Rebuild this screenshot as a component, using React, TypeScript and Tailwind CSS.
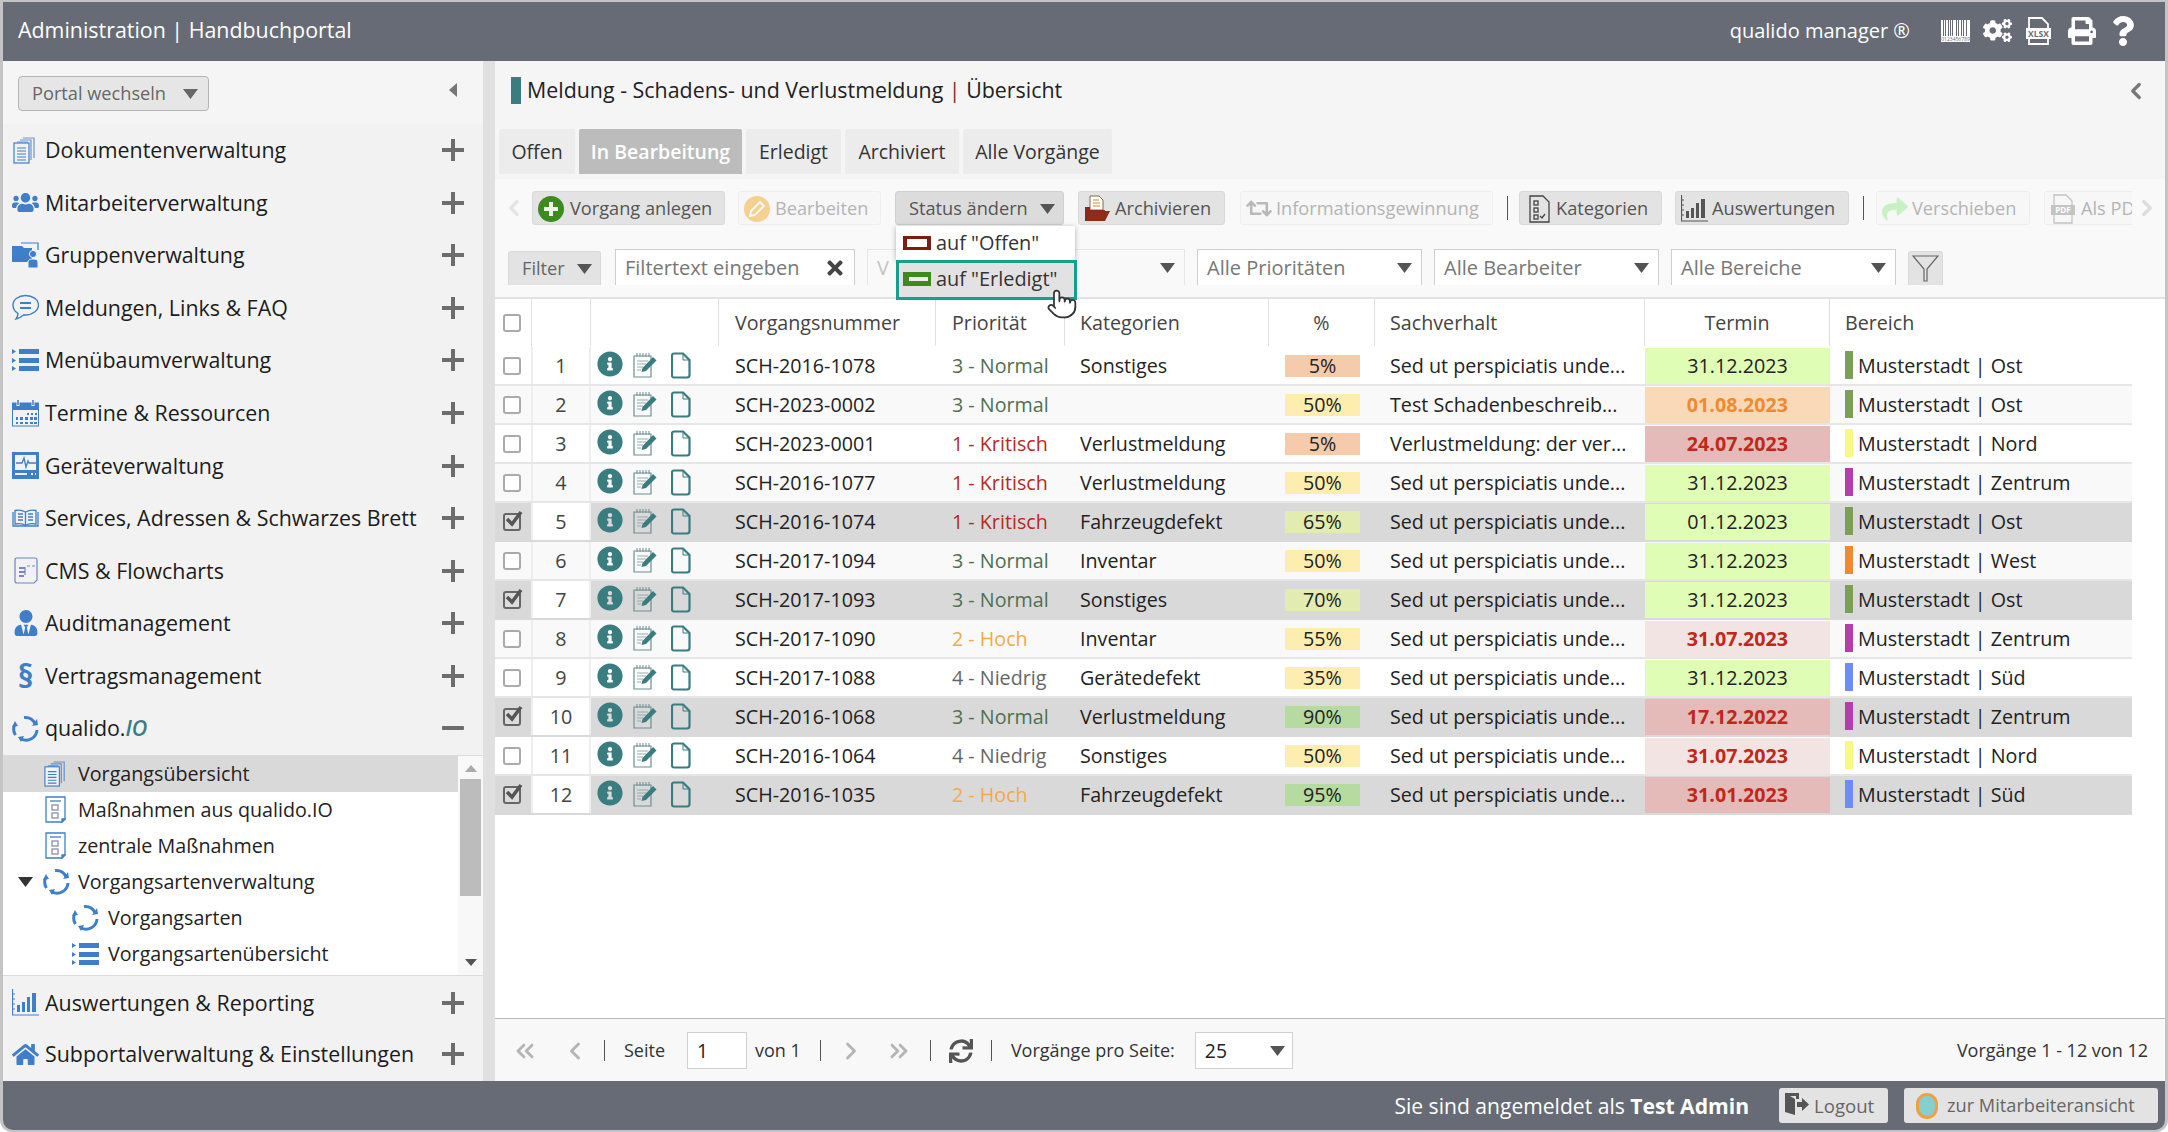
import React from 'react';
import { ChevronLeft, ChevronRight, ChevronsLeft, ChevronsRight, Pointer } from 'lucide-react';
import { FaCogs, FaHome, FaInfoCircle, FaPrint, FaQuestion, FaRetweet, FaShare, FaSync, FaTimes, FaUsers, FaUserTie } from 'react-icons/fa';

const blue = '#3f7fc9';

const Caret: React.FC<{ className?: string }> = ({ className }) => (
  <svg width="15" height="10" viewBox="0 0 15 10" className={className}><path d="M0 0h15L7.5 10z" fill="currentColor" /></svg>
);

const Plus = () => (
  <svg width="22" height="22" viewBox="0 0 22 22"><path d="M9 0h4v9h9v4h-9v9H9v-9H0V9h9z" fill="#6d6d6d" /></svg>
);

const DocsIcon: React.FC<{ size?: number }> = ({ size = 27 }) => (
  <svg width={size} height={size} viewBox="0 0 27 27" fill="none" stroke={blue} strokeWidth="1.2">
    <path d="M11 1h11v20M8 3h11v20M5 5h11" opacity=".8" />
    <rect x="2" y="6" width="15" height="20" fill="#f2f2f2" />
    <path d="M5 11h9M5 14h9M5 17h9M5 20h9M5 23h9" />
  </svg>
);

const ListIcon = () => (
  <svg width="27" height="24" viewBox="0 0 27 24" fill={blue}>
    <path d="M0 1l4 2.5L0 6zM0 10l4 2.5L0 15zM0 18l4 2.5L0 23z" />
    <rect x="7" y="1" width="20" height="5" /><rect x="7" y="10" width="20" height="5" /><rect x="7" y="18" width="20" height="5" />
  </svg>
);

const CycleIcon = () => (
  <svg width="27" height="27" viewBox="0 0 27 27" fill="none" stroke={blue} strokeWidth="3">
    <path d="M12 2.5a11 11 0 0 1 11 6" />
    <path d="M25 15a11 11 0 0 1-16 9" />
    <path d="M3.5 20a11 11 0 0 1-1-10" />
    <path d="M20 11l6-1-1-6zM12 21l-6 1 3 5zM0 12l3-6 3 5z" fill={blue} stroke="none" />
  </svg>
);

const TaskDoc = () => (
  <svg width="21" height="27" viewBox="0 0 21 27" fill="none" stroke={blue} strokeWidth="1.3">
    <path d="M1 1h19v22l-3 3H1z" />
    <path d="M5 5h11" />
    <rect x="7" y="9" width="6" height="5" stroke="#8a8fb0" /><rect x="7" y="17" width="6" height="5" stroke="#8a8fb0" />
    <path d="M17 26l3-3h-3z" fill={blue} />
  </svg>
);

const FolderUser = () => (
  <svg width="27" height="28" viewBox="0 0 27 28" fill={blue}>
    <path d="M0 5h10l2 2h8v14H0z" />
    <path d="M9 2h17v7" fill="none" stroke={blue} strokeWidth="1.2" />
    <circle cx="21" cy="13" r="3.6" stroke="#f2f2f2" />
    <path d="M16 27v-6q0-3 5-3t5 3v6z" stroke="#f2f2f2" />
  </svg>
);

const Chat = () => (
  <svg width="27" height="27" viewBox="0 0 27 27" fill="none" stroke={blue} strokeWidth="1.4">
    <path d="M13.5 1.5C6.5 1.5 1 5.5 1 11c0 4 2.5 7 5 8.500 0 2-1 4-2 5.500 3-.5 6-2.500 8-4.200 1 .2 1 .2 1.500.2 7 0 13-4.500 13-10S20.500 1.500 13.500 1.500z" />
    <path d="M8 9h11M8 14h11" strokeWidth="1.8" />
  </svg>
);

const Calendar = () => (
  <svg width="27" height="27" viewBox="0 0 27 27">
    <rect x="0.500" y="3" width="26" height="23" fill="none" stroke={blue} />
    <rect x="0.500" y="3" width="26" height="7" fill={blue} />
    <path d="M6 0v6M21 0v6" stroke="#f2f2f2" strokeWidth="3" />
    <path d="M6 0v5M21 0v5" stroke={blue} strokeWidth="1.500" />
    <path d="M15 13h2v2h-2zM19 13h2v2h-2zM23 13h2v2h-2zM4 17h2v3H4zM8 17h3v3H8zM13 17h3v3h-3zM18 17h3v3h-3zM22 17h3v3h-3zM4 22h2v2H4zM8 22h3v2H8zM13 22h3v2h-3zM18 22h3v2h-3zM22 22h3v2h-3z" fill={blue} />
  </svg>
);

const Monitor = () => (
  <svg width="27" height="27" viewBox="0 0 27 27">
    <rect x="0" y="0" width="27" height="27" fill={blue} />
    <rect x="3" y="3" width="21" height="15" fill="#f2f2f2" />
    <path d="M4 11h6l2-5 2 9 2-6 1 2h7" fill="none" stroke={blue} strokeWidth="1.300" />
    <path d="M3 22h12M19 22h2M23 22h1" stroke="#f2f2f2" strokeWidth="1.800" />
  </svg>
);

const Book = () => (
  <svg width="27" height="18" viewBox="0 0 27 18" fill="none" stroke={blue} strokeWidth="1.300">
    <path d="M13.500 3C10 1 5 1 3 1.500V15c3-.5 8-.5 10.500 1.500C16 14.500 21 14.500 24 15V1.500C22 1 17 1 13.500 3z" />
    <path d="M1 3v14h25V3M13.500 3v13" />
    <path d="M6 5h5M6 8h5M6 11h5M16 5h5M16 8h5M16 11h5" strokeWidth="1.600" />
  </svg>
);

const CmsDoc = () => (
  <svg width="24" height="27" viewBox="0 0 24 27" fill="none" stroke="#6f86c9" strokeWidth="1.200">
    <path d="M3 1h18q2 0 2 2v20l-3 3H3q-2 0-2-2V3q0-2 2-2z" />
    <path d="M5 11h6M5 15h6M5 19h5" stroke="#7a86c0" strokeWidth="1.800" />
    <path d="M11 10V18M13 9h3M18 9h3" stroke="#7a86c0" />
  </svg>
);

const BarsIcon: React.FC<{ color?: string }> = ({ color = blue }) => (
  <svg width="27" height="27" viewBox="0 0 27 27" fill={color}>
    <rect x="5" y="16" width="3" height="7" /><rect x="10" y="13" width="3" height="10" /><rect x="15" y="8" width="3" height="15" /><rect x="20" y="4" width="4" height="19" />
    <path d="M0.500 0v26H27" fill="none" stroke={color} strokeWidth="1.200" />
    <path d="M1 5h2M1 10h2M1 15h2M1 20h2" stroke={color} />
  </svg>
);

const Barcode = () => (
  <svg width="29" height="22" viewBox="0 0 29 22" fill="#fff" className="ml-[31px]">
    <path d="M0 0h2v16H0zM3 0h1v16H3zM5 0h2v16H5zM8 0h1v16H8zM10 0h1v16h-1zM12 0h3v16h-3zM16 0h1v16h-1zM18 0h2v16h-2zM21 0h1v16h-1zM23 0h2v16h-2zM26 0h3v16h-3z" />
    <rect y="16" width="29" height="6" />
    <text x="14.500" y="21" textAnchor="middle" fontSize="5" fill="#666b75">0123456789</text>
  </svg>
);

const menu: { label: React.ReactNode; icon: React.ReactNode }[] = [
  { label: 'Dokumentenverwaltung', icon: <DocsIcon /> },
  { label: 'Mitarbeiterverwaltung', icon: <FaUsers size={29} color={blue} /> },
  { label: 'Gruppenverwaltung', icon: <FolderUser /> },
  { label: 'Meldungen, Links & FAQ', icon: <Chat /> },
  { label: 'Menübaumverwaltung', icon: <ListIcon /> },
  { label: 'Termine & Ressourcen', icon: <Calendar /> },
  { label: 'Geräteverwaltung', icon: <Monitor /> },
  { label: 'Services, Adressen & Schwarzes Brett', icon: <Book /> },
  { label: 'CMS & Flowcharts', icon: <CmsDoc /> },
  { label: 'Auditmanagement', icon: <FaUserTie size={26} color={blue} /> },
  { label: 'Vertragsmanagement', icon: <span className="text-[32px] leading-none font-bold text-[#3f7fc9]">§</span> },
  { label: <>qualido.<i className="font-semibold text-[#3a7d80]">IO</i></>, icon: <CycleIcon /> },
];

const SideRow: React.FC<{ label: React.ReactNode; icon: React.ReactNode; minus?: boolean; className?: string }> = ({ label, icon, minus, className }) => (
  <div className={`flex items-center pl-[9px] pr-[19px] text-[21.400px] text-[#1c1c1c] ${className ?? 'h-[52.550px]'}`}>
    <span className="w-[27px] h-[27px] flex items-center justify-center shrink-0">{icon}</span>
    <span className="ml-[6px] flex-1 whitespace-nowrap">{label}</span>
    {minus ? <span className="w-[22px] h-[4px] rounded-[1px] bg-[#6d6d6d]" /> : <Plus />}
  </div>
);

const TreeRow: React.FC<{ indent: number; active?: boolean; arrow?: boolean; icon: React.ReactNode; children?: React.ReactNode }> = ({ indent, active, arrow, icon, children }) => (
  <div className={`h-[36px] flex items-center text-[19.700px] text-[#222] whitespace-nowrap ${active ? 'bg-[#d9d9d9]' : ''}`}>
    {arrow ? <Caret className="ml-[15px] text-[#333] mr-[10px]" /> : <span style={{ width: indent }} />}
    <span className="w-[27px] flex justify-center">{icon}</span>
    <span className={arrow ? 'ml-[8px]' : 'ml-[9px]'}>{children}</span>
  </div>
);

const Sidebar = () => (
  <aside className="w-[480px] shrink-0 flex flex-col bg-[#f2f2f2]">
    <div className="h-[63px] shrink-0 bg-[#f5f5f5] flex items-start justify-between pl-[15px] pr-[25px] pt-[15px]">
      <button className="w-[191px] h-[35px] rounded-[4px] border border-[#b5b5b5] bg-[#e6e6e6] text-[#666] text-[18.200px] flex items-center justify-between pl-[13px] pr-[10px]">
        Portal wechseln <Caret className="text-[#666]" />
      </button>
      <svg width="9" height="14" viewBox="0 0 9 14" className="mt-[7px]"><path d="M8 0v14L0 7z" fill="#777" /></svg>
    </div>
    {menu.map((m, i) => <SideRow key={i} label={m.label} icon={m.icon} minus={i === 11} />)}
    <div className="h-[221px] shrink-0 flex bg-white border-y border-[#dcdcdc] overflow-hidden">
      <div className="flex-1 overflow-hidden">
        <TreeRow indent={39} active icon={<DocsIcon size={26} />}>Vorgangsübersicht</TreeRow>
        <TreeRow indent={39} icon={<TaskDoc />}>Maßnahmen aus qualido.IO</TreeRow>
        <TreeRow indent={39} icon={<TaskDoc />}>zentrale Maßnahmen</TreeRow>
        <TreeRow indent={39} arrow icon={<CycleIcon />}>Vorgangsartenverwaltung</TreeRow>
        <TreeRow indent={69} icon={<CycleIcon />}>Vorgangsarten</TreeRow>
        <TreeRow indent={69} icon={<ListIcon />}>Vorgangsartenübersicht</TreeRow>
        <TreeRow indent={69} icon={<CycleIcon />} />
      </div>
      <div className="w-[25px] shrink-0 bg-[#f8f8f8] flex flex-col items-center py-[9px]">
        <svg width="12" height="7" viewBox="0 0 12 7"><path d="M0 7h12L6 0z" fill="#aaa" /></svg>
        <div className="w-[21px] h-[117px] mt-[7px] bg-[#bcbcbc]" />
        <svg width="12" height="7" viewBox="0 0 12 7" className="mt-auto"><path d="M0 0h12L6 7z" fill="#555" /></svg>
      </div>
    </div>
    <SideRow label="Auswertungen & Reporting" icon={<BarsIcon />} className="h-[52.550px] pt-[2px]" />
    <SideRow label="Subportalverwaltung & Einstellungen" icon={<FaHome size={29} color={blue} />} className="h-[52.450px]" />
  </aside>
);

const Btn: React.FC<{ w: number; icon?: React.ReactNode; disabled?: boolean; active?: boolean; children: React.ReactNode }> = ({ w, icon, disabled, active, children }) => (
  <button
    style={{ width: w }}
    className={`h-[34px] shrink-0 rounded-[3px] border flex items-center gap-[4px] pl-[5px] pt-[1px] overflow-hidden whitespace-nowrap text-[18.200px] ${
      disabled ? 'border-[#eeeeee] bg-[#f7f7f7] text-[#b4b4b4]' : active ? 'border-[#d0d0d0] bg-[#dcdcdc] text-[#555]' : 'border-[#d9d9d9] bg-[#e3e3e3] text-[#555]'
    }`}
  >
    {icon}
    {children}
  </button>
);

const Sep = () => <span className="w-px h-[24px] bg-[#555] shrink-0" />;

const Toolbar = () => (
  <div className="flex items-center h-[34px] relative">
    <ChevronLeft size={26} strokeWidth={3} className="text-[#e4e4e4] ml-[6px] mr-[5px] shrink-0" />
    <div className="flex items-center w-[1600px] overflow-hidden">
      <Btn w={193} icon={<svg width="26" height="26" viewBox="0 0 26 26" className="mr-[2px] shrink-0"><circle cx="13" cy="13" r="13" fill="#3d8b1f" /><path d="M11 6h4v5h5v4h-5v5h-4v-5H6v-4h5z" fill="#eef5e8" /></svg>}>Vorgang anlegen</Btn>
      <span className="w-[13px] shrink-0" />
      <Btn w={143} disabled icon={<svg width="26" height="26" viewBox="0 0 26 26" className="mr-[1px] shrink-0"><circle cx="13" cy="13" r="13" fill="#f5d08f" /><path d="M16 6l4 4-9 9-5 1 1-5z" fill="none" stroke="#fff" strokeWidth="1.800" /></svg>}>Bearbeiten</Btn>
      <span className="w-[14px] shrink-0" />
      <Btn w={169} active><span className="ml-[8px] flex-1 text-left">Status ändern</span><Caret className="text-[#555] mr-[8px]" /></Btn>
      <span className="w-[14px] shrink-0" />
      <Btn w={147} icon={<svg width="27" height="27" viewBox="0 0 27 27" className="shrink-0"><path d="M6 1h9l4 4v10H6z" fill="#fff" stroke="#8a6a40" /><path d="M9 5h6M9 8h7M9 11h7" stroke="#c08a3a" /><path d="M1 12h5v3h15l-3 11H1z" fill="#8b2a1a" /><path d="M8 16h18l-5 10H2z" fill="#8f2c1c" /></svg>}>Archivieren</Btn>
      <span className="w-[15px] shrink-0" />
      <Btn w={253} disabled icon={<FaRetweet size={23} className="w-[26px] shrink-0 text-[#b9b9b9]" />}>Informationsgewinnung</Btn>
      <span className="w-[14px] shrink-0" /><Sep /><span className="w-[11px] shrink-0" />
      <Btn w={143} icon={<svg width="22" height="28" viewBox="0 0 22 28" fill="none" stroke="#444" strokeWidth="1.300" className="ml-[3px] shrink-0"><path d="M2 1h13l6 6v20H2z" /><rect x="6" y="6" width="4" height="4" /><rect x="6" y="13" width="4" height="4" /><rect x="6" y="20" width="4" height="4" /><path d="M12 21l2 2 3-4" /></svg>}><span className="ml-[2px]">Kategorien</span></Btn>
      <span className="w-[13px] shrink-0" />
      <Btn w={174} icon={<BarsIcon color="#555" />}>Auswertungen</Btn>
      <span className="w-[14px] shrink-0" /><Sep /><span className="w-[12px] shrink-0" />
      <Btn w={154} disabled icon={<FaShare size={26} className="shrink-0 text-[#c9f0c5]" />}>Verschieben</Btn>
      <span className="w-[14px] shrink-0" />
      <Btn w={96} disabled icon={<svg width="24" height="30" viewBox="0 0 24 30" className="ml-[1px] mr-[2px] shrink-0"><path d="M3 1h12l6 6v22H3z" fill="none" stroke="#c4c4c4" strokeWidth="1.300" /><rect x="0" y="11" width="24" height="10" fill="#c4c4c4" /><text x="12" y="19" textAnchor="middle" fontSize="8" fontWeight="700" fill="#fff">PDF</text></svg>}>Als PDF</Btn>
    </div>
    <ChevronRight size={26} strokeWidth={3} className="text-[#dcdcdc] ml-[2px] shrink-0" />
  </div>
);

const StatusMenu = () => (
  <div className="absolute left-[401px] top-[165px] w-[181px] z-20">
    <div className="w-[179px] h-[34px] bg-white shadow-[0_1px_5px_rgba(0,0,0,0.3)] flex items-center pl-[7px] gap-[5px] text-[19.900px] text-[#333]">
      <span className="w-[28px] h-[14px] border-[3px] border-x-[4px] border-[#7c1c14] bg-white shrink-0" />
      auf "Offen"
    </div>
    <div className="h-[40px] border-[3px] border-[#14a08c] bg-[#e2e2e2] flex items-center pl-[4px] pb-[2px] gap-[5px] text-[19.900px] text-[#333]">
      <span className="w-[28px] h-[14px] bg-[#3d8b1f] flex items-center justify-end pr-[3px] shrink-0"><span className="w-[19px] h-[4px] bg-[#eee]" /></span>
      auf "Erledigt"
    </div>
    <Pointer size={32} strokeWidth={1.300} fill="#fff" className="absolute left-[150px] top-[62px] text-[#333]" />
  </div>
);

const Select: React.FC<{ w: number; disabled?: boolean; children: React.ReactNode }> = ({ w, disabled, children }) => (
  <div
    style={{ width: w }}
    className={`h-[36px] shrink-0 border-t border-x flex items-center justify-between pl-[9px] pr-[9px] pt-[1px] text-[20px] whitespace-nowrap ${
      disabled ? 'border-[#e6e6e6] bg-[#f9f9f9] text-[#c4c4c4]' : 'border-[#cfcfcf] bg-white text-[#777]'
    }`}
  >
    {children}
    <Caret className="text-[#555]" />
  </div>
);

const FilterRow = () => (
  <div className="flex items-end h-[36px] pl-[13px] gap-[12px]">
    <div className="w-[93px] h-[34px] rounded-t-[3px] border-t border-x border-[#d9d9d9] bg-[#e3e3e3] text-[#666] text-[18.200px] flex items-center justify-between pl-[13px] pr-[8px]">
      Filter <Caret className="text-[#555]" />
    </div>
    <div className="w-[240px] h-[36px] ml-[2px] border-t border-x border-[#cfcfcf] bg-white flex items-center justify-between pl-[9px] pr-[8px] pt-[1px] text-[20px] text-[#777]">
      Filtertext eingeben
      <FaTimes size={22} className="text-[#444]" />
    </div>
    <Select w={318} disabled>V</Select>
    <Select w={225}>Alle Prioritäten</Select>
    <Select w={225}>Alle Bearbeiter</Select>
    <Select w={225}>Alle Bereiche</Select>
    <div className="w-[35px] h-[34px] rounded-t-[3px] bg-[#e3e3e3] border-t border-x border-[#d9d9d9] flex items-center justify-center">
      <svg width="27" height="27" viewBox="0 0 27 27" fill="none" stroke="#666" strokeWidth="1.200"><path d="M1 1h25L15 14v12h-3V14z" /></svg>
    </div>
  </div>
);

type Row = {
  nr: number; id: string; prio: string; kat: string; pct: string; pctBg: string; text: string;
  date: string; dateBg: string; dateCls: string; area: string; areaCol: string; sel?: boolean;
};

const green = { dateBg: 'bg-[#e0fdb5]', dateCls: 'text-[#222]' };
const pale = { dateBg: 'bg-[#f2e4e3]', dateCls: 'font-bold text-[#c0281a]' };
const red = { dateBg: 'bg-[#e4bbb9]', dateCls: 'font-bold text-[#c0281a]' };
const lorem = 'Sed ut perspiciatis unde...';
const Ost = { area: 'Musterstadt | Ost', areaCol: 'bg-[#7a9f5a]' };
const Nord = { area: 'Musterstadt | Nord', areaCol: 'bg-[#f8f884]' };
const Zentrum = { area: 'Musterstadt | Zentrum', areaCol: 'bg-[#b43eae]' };
const West = { area: 'Musterstadt | West', areaCol: 'bg-[#f08a30]' };
const Sued = { area: 'Musterstadt | Süd', areaCol: 'bg-[#6f8cf5]' };
const orangePct = 'bg-[#f5cbab]';
const yellowPct = 'bg-[#fdeeb0]';
const limePct = 'bg-[#e2ebb0]';
const greenPct = 'bg-[#b6dba0]';

const rows: Row[] = [
  { nr: 1, id: 'SCH-2016-1078', prio: '3 - Normal', kat: 'Sonstiges', pct: '5%', pctBg: orangePct, text: lorem, date: '31.12.2023', ...green, ...Ost },
  { nr: 2, id: 'SCH-2023-0002', prio: '3 - Normal', kat: '', pct: '50%', pctBg: yellowPct, text: 'Test Schadenbeschreib...', date: '01.08.2023', dateBg: 'bg-[#f9d9b7]', dateCls: 'font-bold text-[#f08a30]', ...Ost },
  { nr: 3, id: 'SCH-2023-0001', prio: '1 - Kritisch', kat: 'Verlustmeldung', pct: '5%', pctBg: orangePct, text: 'Verlustmeldung: der ver...', date: '24.07.2023', ...red, ...Nord },
  { nr: 4, id: 'SCH-2016-1077', prio: '1 - Kritisch', kat: 'Verlustmeldung', pct: '50%', pctBg: yellowPct, text: lorem, date: '31.12.2023', ...green, ...Zentrum },
  { nr: 5, id: 'SCH-2016-1074', prio: '1 - Kritisch', kat: 'Fahrzeugdefekt', pct: '65%', pctBg: limePct, text: lorem, date: '01.12.2023', ...green, ...Ost, sel: true },
  { nr: 6, id: 'SCH-2017-1094', prio: '3 - Normal', kat: 'Inventar', pct: '50%', pctBg: yellowPct, text: lorem, date: '31.12.2023', ...green, ...West },
  { nr: 7, id: 'SCH-2017-1093', prio: '3 - Normal', kat: 'Sonstiges', pct: '70%', pctBg: limePct, text: lorem, date: '31.12.2023', ...green, ...Ost, sel: true },
  { nr: 8, id: 'SCH-2017-1090', prio: '2 - Hoch', kat: 'Inventar', pct: '55%', pctBg: yellowPct, text: lorem, date: '31.07.2023', ...pale, ...Zentrum },
  { nr: 9, id: 'SCH-2017-1088', prio: '4 - Niedrig', kat: 'Gerätedefekt', pct: '35%', pctBg: yellowPct, text: lorem, date: '31.12.2023', ...green, ...Sued },
  { nr: 10, id: 'SCH-2016-1068', prio: '3 - Normal', kat: 'Verlustmeldung', pct: '90%', pctBg: greenPct, text: lorem, date: '17.12.2022', ...red, ...Zentrum, sel: true },
  { nr: 11, id: 'SCH-2016-1064', prio: '4 - Niedrig', kat: 'Sonstiges', pct: '50%', pctBg: yellowPct, text: lorem, date: '31.07.2023', ...pale, ...Nord },
  { nr: 12, id: 'SCH-2016-1035', prio: '2 - Hoch', kat: 'Fahrzeugdefekt', pct: '95%', pctBg: greenPct, text: lorem, date: '31.01.2023', ...red, ...Sued, sel: true },
];

const prioColor = (p: string) => {
  if (p.startsWith('1')) return 'text-[#b8281c]';
  if (p.startsWith('2')) return 'text-[#f2a94a]';
  if (p.startsWith('3')) return 'text-[#4f7050]';
  return 'text-[#666]';
};

const Check: React.FC<{ on?: boolean }> = ({ on }) => (
  <span className={`relative block w-[18px] h-[18px] rounded-[3px] border-2 ${on ? 'border-[#666] bg-[#dcdcdc]' : 'border-[#aaa] bg-white'}`}>
    {on && (
      <svg width="20" height="18" viewBox="0 0 20 18" className="absolute left-[-1px] top-[-5px]">
        <path d="M3 9l5 5 9-12" fill="none" stroke="#555" strokeWidth="3.500" />
      </svg>
    )}
  </span>
);

const NoteIcon = () => (
  <svg width="24" height="25" viewBox="0 0 24 25" fill="none">
    <path d="M1 3h17v21H1z" stroke="#6d8f92" strokeWidth="1.200" />
    <path d="M4 0v4M7 0v4M10 0v4M13 0v4M16 0v4" stroke="#6d8f92" />
    <path d="M4 8h11M4 11h9M4 14h6M4 17h4" stroke="#9aa" />
    <path d="M20 4l3.500 3.500L13 18l-4.500 1L9.500 15z" fill="#3a7d80" />
  </svg>
);

const FileIcon = () => (
  <svg width="20" height="27" viewBox="0 0 20 27" fill="none" stroke="#3a7d80" strokeWidth="2.200">
    <path d="M3 1.500h9l6.500 6.500v15q0 2.500-2.500 2.500H3q-2 0-2-2V3.500q0-2 2-2z" />
    <path d="M12 2v6h6" strokeWidth="1" />
  </svg>
);

const cols = 'grid grid-cols-[36px_60px_128px_217px_129px_204px_106px_270px_185px_302px] w-[1637px]';

const TableHead = () => (
  <div className="h-[50px] shrink-0 border-t-2 border-[#e2e2e2] bg-white">
    <div className={`${cols} h-[47px] text-[19.700px] text-[#444] items-center [&>div]:h-full [&>div]:flex [&>div]:items-center [&>div]:border-r [&>div]:border-[#e0e0e0]`}>
      <div className="pl-[8px] !border-r-0"><Check /></div>
      <div className="border-l border-[#e0e0e0]" />
      <div />
      <div className="pl-[16px]">Vorgangsnummer</div>
      <div className="pl-[16px]">Priorität</div>
      <div className="pl-[15px]">Kategorien</div>
      <div className="justify-center">%</div>
      <div className="pl-[15px]">Sachverhalt</div>
      <div className="justify-center">Termin</div>
      <div className="pl-[15px] !border-r-0">Bereich</div>
    </div>
  </div>
);

const TableRow: React.FC<{ r: Row }> = ({ r }) => (
  <div className={`${cols} h-[39px] border-b-2 items-center text-[19.700px] text-[#222] ${r.sel ? 'bg-[#d9d9d9] border-[#d9d9d9]' : r.nr % 2 ? 'bg-white border-[#e6e6e6]' : 'bg-[#f9f9f9] border-[#e6e6e6]'}`}>
    <div className="pl-[8px]"><Check on={r.sel} /></div>
    <div className={`h-full flex items-center justify-center border-x-2 border-[#eeeeee] text-[#444] ${r.sel ? 'bg-white' : ''}`}>{r.nr}</div>
    <div className="flex items-center pl-[6px]">
      <FaInfoCircle size={26} color="#3a7d80" className="mt-[-3px]" />
      <span className="ml-[10px]"><NoteIcon /></span>
      <span className="ml-[14px]"><FileIcon /></span>
    </div>
    <div className="pl-[16px] whitespace-nowrap">{r.id}</div>
    <div className={`pl-[16px] whitespace-nowrap ${prioColor(r.prio)}`}>{r.prio}</div>
    <div className="pl-[15px]">{r.kat}</div>
    <div className="pl-[16px]"><span className={`block w-[75px] h-[22px] leading-[22px] text-center ${r.pctBg}`}>{r.pct}</span></div>
    <div className="pl-[15px] whitespace-nowrap">{r.text}</div>
    <div className={`h-[36px] flex items-center justify-center ${r.dateBg} ${r.dateCls}`}>{r.date}</div>
    <div className="pl-[15px] flex items-center whitespace-nowrap">
      <span className={`w-[8px] h-[28px] mr-[5px] ${r.areaCol}`} />{r.area}
    </div>
  </div>
);

const VLine = () => <span className="block w-px h-[21px] bg-[#555] shrink-0" />;

const Pagination = () => (
  <div className="h-[63px] shrink-0 border-t border-[#b8b8b8] bg-[#f8f8f8] flex items-center text-[18px] text-[#333] pr-[17px] pt-[1px]">
    <ChevronsLeft size={28} strokeWidth={2.500} className="ml-[16px] text-[#b5b5b5] shrink-0" />
    <ChevronLeft size={28} strokeWidth={2.500} className="ml-[22px] text-[#b5b5b5] shrink-0" />
    <span className="ml-[15px]"><VLine /></span>
    <span className="ml-[19px]">Seite</span>
    <span className="ml-[22px] w-[60px] h-[37px] bg-white border border-[#d0d0d0] flex items-center pl-[9px] text-[19.400px] text-[#222]">1</span>
    <span className="ml-[8px]">von 1</span>
    <span className="ml-[19px]"><VLine /></span>
    <ChevronRight size={28} strokeWidth={2.500} className="ml-[16px] text-[#b5b5b5] shrink-0" />
    <ChevronsRight size={28} strokeWidth={2.500} className="ml-[20px] text-[#b5b5b5] shrink-0" />
    <span className="ml-[17px]"><VLine /></span>
    <FaSync size={24} className="ml-[18px] text-[#555] shrink-0" />
    <span className="ml-[18px]"><VLine /></span>
    <span className="ml-[19px]">Vorgänge pro Seite:</span>
    <span className="ml-[20px] w-[98px] h-[37px] bg-white border border-[#d0d0d0] flex items-center justify-between pl-[9px] pr-[7px] text-[19.400px] text-[#222]">25 <Caret className="text-[#555]" /></span>
    <span className="ml-auto">Vorgänge 1 - 12 von 12</span>
  </div>
);

const tabClass = 'flex items-center justify-center rounded-t-[2px] bg-[#ececec]';

const Main = () => (
  <main className="flex-1 min-w-0 flex flex-col bg-[#f5f5f5] relative">
    <div className="h-[68px] shrink-0 flex items-center pl-[16px] pr-[16px] pb-[9px] text-[21.400px] text-[#222] whitespace-pre">
      <span className="w-[10px] h-[27px] bg-[#3a7d80] mr-[6px]" />
      Meldung - Schadens- und Verlustmeldung <span className="text-[#8a2a2a]">|</span> Übersicht
      <ChevronLeft size={26} strokeWidth={3} className="ml-auto text-[#777]" />
    </div>
    <div className="h-[45px] shrink-0 flex gap-[4px] pl-[4px] text-[19.500px] text-[#333]">
      <span className={`w-[76px] ${tabClass}`}>Offen</span>
      <span className="w-[163px] flex items-center justify-center rounded-t-[2px] bg-[#bcbcbc] text-white font-semibold">In Bearbeitung</span>
      <span className={`w-[95px] ${tabClass}`}>Erledigt</span>
      <span className={`w-[114px] ${tabClass}`}>Archiviert</span>
      <span className={`w-[149px] ${tabClass}`}>Alle Vorgänge</span>
    </div>
    <div className="h-[118px] mt-[5px] shrink-0 bg-[#f9f9f9] pt-[12px]">
      <Toolbar />
      <div className="mt-[24px]"><FilterRow /></div>
    </div>
    <StatusMenu />
    <TableHead />
    <div className="flex-1 bg-white min-h-0">
      {rows.map(r => <TableRow key={r.nr} r={r} />)}
    </div>
    <Pagination />
  </main>
);

const App: React.FC = () => (
  <div className="w-[2168px] h-[1132px] bg-white overflow-hidden font-['Open_Sans',sans-serif]">
    <div className="w-full h-full bg-[#c4c4c4] rounded-b-[12px] pt-[2px] px-[3px] pb-[2px]">
      <div className="h-full flex flex-col rounded-b-[10px] overflow-hidden">
        <header className="h-[59px] shrink-0 bg-[#666b75] flex items-center text-white text-[21.400px] pl-[15px] pr-[27px] pb-[2px]">
          <span>Administration | Handbuchportal</span>
          <span className="ml-auto text-[20px]">qualido manager ®</span>
          <Barcode />
          <FaCogs size={29} className="ml-[13px]" />
          <svg width="25" height="28" viewBox="0 0 25 28" className="ml-[14px]" fill="none" stroke="#fff" strokeWidth="1.800">
            <path d="M3 12V1h13l6 6v5M3 22v5h19v-5" />
            <rect x="0" y="11" width="25" height="11" fill="#fff" stroke="none" />
            <text x="12.500" y="20" textAnchor="middle" fontSize="8.500" fontWeight="700" fill="#666b75" stroke="none">XLSX</text>
          </svg>
          <FaPrint size={28} className="ml-[17px]" />
          <FaQuestion size={30} className="ml-[12px]" />
        </header>
        <div className="flex-1 min-h-0 flex">
          <Sidebar />
          <div className="w-[12px] shrink-0 bg-[#e0e0e0]" />
          <Main />
        </div>
        <footer className="h-[49px] shrink-0 bg-[#666b75] flex items-center justify-end pr-[7px] text-white text-[21.100px]">
          <span>Sie sind angemeldet als <b>Test Admin</b></span>
          <button className="ml-[30px] w-[109px] h-[35px] rounded-[3px] bg-[#e3e3e3] text-[#666] text-[18.600px] flex items-center gap-[4px] pl-[5px]">
            <svg width="26" height="27" viewBox="0 0 26 27" fill="#555"><path d="M1 1h14v6h-3V4H6l5 3v16l-10-3z" /><path d="M13 10h5V6l7 6.500-7 6.500v-4h-5z" /></svg>
            Logout
          </button>
          <button className="ml-[16px] w-[254px] h-[35px] rounded-[3px] bg-[#e3e3e3] text-[#666] text-[18.200px] flex items-center gap-[9px] pl-[12px]">
            <span className="w-[22px] h-[26px] rounded-full border-[3px] border-[#f0a040] bg-[#86cfd0]" />
            zur Mitarbeiteransicht
          </button>
        </footer>
      </div>
    </div>
  </div>
);

export default App;
